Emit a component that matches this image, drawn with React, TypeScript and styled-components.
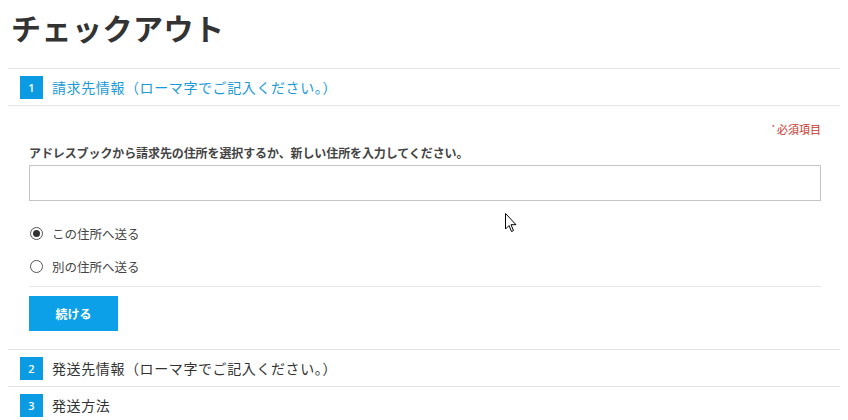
import React from "react";
import styled, { createGlobalStyle } from "styled-components";

const Global = createGlobalStyle`
  html, body { margin: 0; padding: 0; background: #fff; }
  body { font-family: "Noto Sans CJK JP", "Noto Sans", sans-serif; color: #333; }
`;

const Page = styled.div`
  position: relative;
  width: 848px;
  height: 420px;
  overflow: hidden;
  padding: 0 8px;
  box-sizing: border-box;
`;

const Title = styled.h1`
  margin: 0;
  padding: 5px 0 0 3px;
  height: 68px;
  box-sizing: border-box;
  font-size: 30px;
  line-height: 44px;
  font-weight: 700;
  color: #333;
  letter-spacing: 0.5px;
`;

const Steps = styled.div`
  display: flex;
  flex-direction: column;
  border-top: 1px solid #e4e4e4;
`;

const StepHead = styled.div`
  display: flex;
  align-items: center;
  gap: 9px;
  height: 36px;
  padding-left: 12px;
  border-bottom: 1px solid #e4e4e4;
`;

const Badge = styled.span`
  width: 23px;
  height: 23px;
  display: flex;
  align-items: center;
  justify-content: center;
  background: #0a9be2;
  color: #fff;
  font-family: "Open Sans", "Liberation Sans", sans-serif;
  font-size: 11px;
  font-weight: 600;
`;

const StepTitle = styled.span<{ $active?: boolean }>`
  font-size: 14px;
  line-height: 20px;
  letter-spacing: 0.6px;
  color: ${(p) => (p.$active ? "#1a9ad8" : "#333")};
`;

const StepBody = styled.div`
  padding: 13px 19px 18px 21px;
  border-bottom: 1px solid #e4e4e4;
  display: flex;
  flex-direction: column;
`;

const Required = styled.div`
  align-self: flex-end;
  font-size: 11px;
  line-height: 16px;
  color: #c8322a;
  sup {
    font-size: 7px;
    vertical-align: 4px;
    margin-right: 2px;
  }
`;

const Label = styled.label`
  margin-top: 8px;
  font-size: 12px;
  line-height: 16px;
  font-weight: 700;
  color: #444;
  letter-spacing: -0.1px;
`;

const Select = styled.div`
  margin-top: 4px;
  height: 36px;
  border: 1px solid #c4c4c4;
  box-sizing: border-box;
  background: #fff;
`;

const RadioList = styled.div`
  display: flex;
  flex-direction: column;
  gap: 13px;
  margin-top: 22px;
  padding-bottom: 10px;
  border-bottom: 1px solid #e8e8e8;
`;

const RadioRow = styled.label`
  display: flex;
  align-items: center;
  gap: 9px;
  height: 20px;
  font-size: 12.5px;
  color: #444;
`;

const RadioDot = styled.span<{ $checked?: boolean }>`
  width: 11px;
  height: 11px;
  margin-left: 1px;
  border: 1px solid #555;
  border-radius: 50%;
  display: flex;
  align-items: center;
  justify-content: center;
  &::after {
    content: "";
    width: 7px;
    height: 7px;
    border-radius: 50%;
    background: ${(p) => (p.$checked ? "#333" : "transparent")};
  }
`;

const Button = styled.button`
  margin-top: 9px;
  width: 89px;
  height: 35px;
  border: none;
  background: #0ca0e8;
  color: #fff;
  font-family: inherit;
  font-size: 12px;
  font-weight: 700;
  padding: 0;
  cursor: pointer;
`;

const Cursor = styled.svg`
  position: absolute;
  left: 505px;
  top: 213px;
`;

export default function App() {
  return (
    <>
      <Global />
      <Page>
        <Title>チェックアウト</Title>
        <Steps>
          <StepHead>
            <Badge>1</Badge>
            <StepTitle $active>請求先情報（ローマ字でご記入ください。）</StepTitle>
          </StepHead>
          <StepBody>
            <Required>
              <sup>*</sup>必須項目
            </Required>
            <Label>アドレスブックから請求先の住所を選択するか、新しい住所を入力してください。</Label>
            <Select />
            <RadioList>
              <RadioRow>
                <RadioDot $checked />
                この住所へ送る
              </RadioRow>
              <RadioRow>
                <RadioDot />
                別の住所へ送る
              </RadioRow>
            </RadioList>
            <Button>続ける</Button>
          </StepBody>
          <StepHead>
            <Badge>2</Badge>
            <StepTitle>発送先情報（ローマ字でご記入ください。）</StepTitle>
          </StepHead>
          <StepHead>
            <Badge>3</Badge>
            <StepTitle>発送方法</StepTitle>
          </StepHead>
        </Steps>
        <Cursor width="12" height="20" viewBox="0 0 12 20">
          <path
            d="M0.5 0.5 L0.5 16 L4 12.5 L6.5 18.5 L8.5 17.6 L6 11.7 L11 11.7 Z"
            fill="#fff"
            stroke="#000"
            strokeWidth="1"
            strokeLinejoin="miter"
          />
        </Cursor>
      </Page>
    </>
  );
}
